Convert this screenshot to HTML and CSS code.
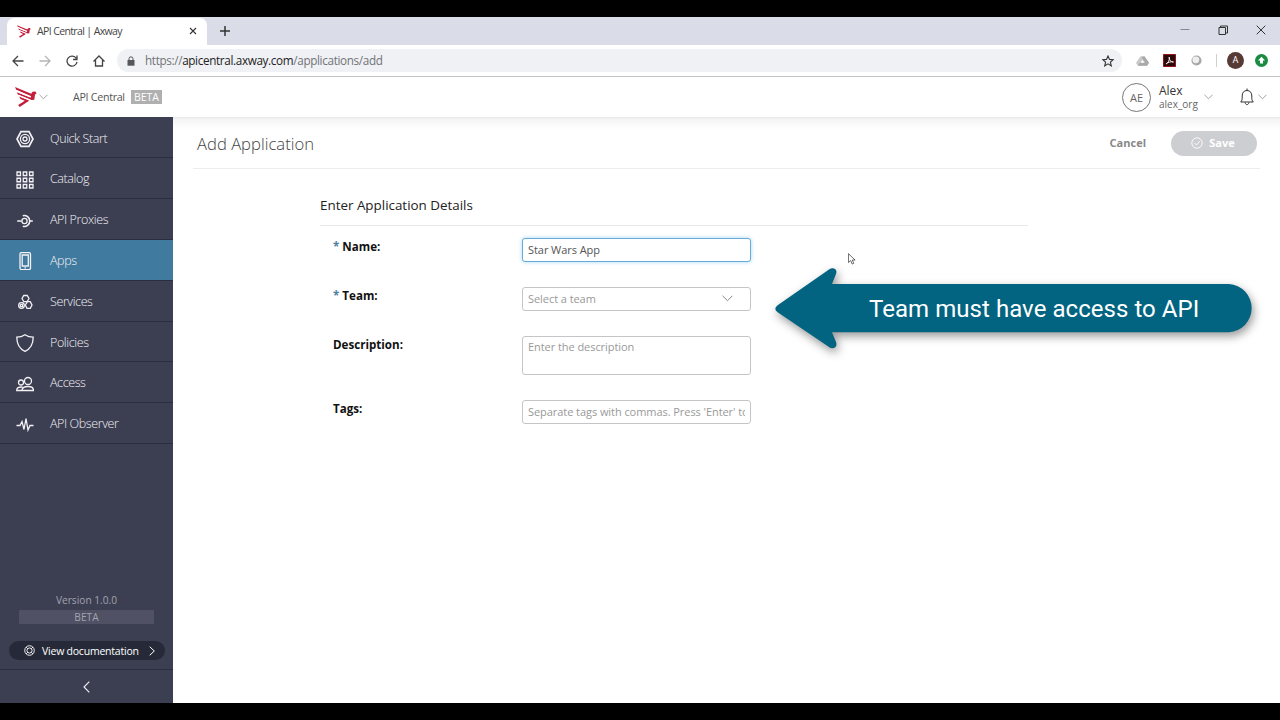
FILE: index.html
```
<!DOCTYPE html>
<html lang="en">
<head>
    <meta charset="UTF-8">
    <title>API Central | Axway</title>
    <link rel="stylesheet" href="styles.css">
</head>
<body>
    <svg class="sprite" aria-hidden="true">
        <symbol id="logo" viewBox="0 0 22 20">
            <path d="M0 0L16.200 6.700L17.500 4.700L20.500 4.500L21.500 6.600L20 7.400L19.300 12.800L16.500 13L2.800 7.400L1.800 5.200L15.500 10.600L16.200 9.200L1.200 2.700Z"/>
            <path d="M4 9.300L14.500 13.600L4.700 20L3.200 17.900L9.800 13.800L5.500 12Z"/>
            <path class="gap" d="M1.500 4L15.500 9.900M3.200 8.400L15 13.200"/>
        </symbol>
        <symbol id="chevron" viewBox="0 0 10 6">
            <path d="M.5 .5L5 5L9.500 .5"/>
        </symbol>
    </svg>

    <div class="tab-strip">
        <div class="tab">
            <svg class="logo logo-small"><use href="#logo"/></svg>
            <span class="tab-title">API Central | Axway</span>
            <svg class="icon tab-close" viewBox="0 0 8 8"><path d="M1 1L7 7M7 1L1 7"/></svg>
        </div>
        <svg class="icon new-tab" viewBox="0 0 12 12"><path d="M6 1V11M1 6H11"/></svg>
        <div class="window-buttons">
            <svg class="icon minimize" viewBox="0 0 10 10"><path d="M0.500 4.500H9.500"/></svg>
            <svg class="icon" viewBox="0 0 10 10"><path d="M1 2.500H7.500V9.500H1ZM2.500 2.500V1H9.500V8H7.500"/></svg>
            <svg class="icon" viewBox="0 0 10 10"><path d="M.7 .7L9.300 9.300M9.300 .7L.7 9.300"/></svg>
        </div>
    </div>

    <div class="toolbar">
        <div class="nav-buttons">
            <svg class="icon" viewBox="0 0 12 12"><path d="M11.500 6H1M6 1L1 6L6 11"/></svg>
            <svg class="icon disabled" viewBox="0 0 12 12"><path d="M.5 6H11M6 1L11 6L6 11"/></svg>
            <svg class="icon" viewBox="0 0 12 12"><path d="M10.300 3.500A5 5 0 1 0 11 6.800M7 4.500H11V.5"/></svg>
            <svg class="icon" viewBox="0 0 12 12"><path d="M.5 6.500L6 1L11.500 6.500M2.500 5V11H9.500V5"/></svg>
        </div>
        <div class="address-bar">
            <svg class="lock" viewBox="0 0 8 10"><path class="body" d="M.5 4H7.500V9.700H.5Z"/><path class="shackle" d="M2 4.500V2.800A2 2 0 0 1 6 2.800V4.500"/></svg>
            <span class="url">https://<b>apicentral.axway.com</b>/applications/add</span>
            <svg class="icon star" viewBox="0 0 12 12"><path d="M6 1L7.500 4.400L11.200 4.700L8.400 7.200L9.300 10.900L6 8.900L2.700 10.900L3.600 7.200L.8 4.700L4.500 4.400Z"/></svg>
        </div>
        <div class="extensions">
            <svg class="drive" viewBox="0 0 14 12"><path fill="#c9c9c9" d="M5 1H9L14 8L12 11H2L0 8Z"/><path fill="#a9a9a9" d="M9 1L14 8H10L6 2ZM2 11L4 8H14L12 11Z"/><path fill="#fff" d="M7 5L9 8H5Z"/></svg>
            <svg class="acrobat" viewBox="0 0 13 13"><path fill="#2b0809" stroke="#941519" d="M.5 .5H12.500V12.500H.5Z"/><path fill="none" stroke="#f4e8e8" d="M3 10C5 9 7 6 6.200 3C6 6 8 8 10.500 8C8 7.500 5 8 3 10"/></svg>
            <svg class="ring" viewBox="0 0 12 12"><circle cx="6" cy="6" r="5.500" fill="#a7a7a7"/><circle cx="5.300" cy="5.300" r="3.700" fill="#efefef"/></svg>
            <span class="separator"></span>
            <span class="profile">A</span>
            <svg class="update" viewBox="0 0 13 13"><circle cx="6.500" cy="6.500" r="6.500" fill="#1c8b42"/><path fill="#fff" d="M6.500 2.700L10 6.500H8V9.500H5V6.500H3Z"/></svg>
        </div>
    </div>

    <header class="app-header">
        <svg class="logo"><use href="#logo"/></svg>
        <svg class="chevron"><use href="#chevron"/></svg>
        <span class="product">API Central</span>
        <span class="beta-badge">BETA</span>
        <div class="user">
            <span class="avatar">AE</span>
            <div class="user-text">
                <div class="user-name">Alex</div>
                <div class="user-org">alex_org</div>
            </div>
            <svg class="chevron"><use href="#chevron"/></svg>
            <svg class="icon bell" viewBox="0 0 14 18"><path d="M.7 14H13.300C11.800 12.500 11.800 11.500 11.800 8C11.800 4.500 10 2.500 7 2.500S2.200 4.500 2.200 8C2.200 11.500 2.200 12.500 .7 14ZM7 2.500V.5M5.200 14.500C5.200 17.300 8.800 17.300 8.800 14.500"/></svg>
            <svg class="chevron"><use href="#chevron"/></svg>
        </div>
    </header>

    <div class="app-body">
        <nav class="sidebar">
            <a class="nav-item">
                <svg class="icon" viewBox="0 0 18 18"><path stroke-width="1.700" d="M5 1.700H13L17 9L13 16.300H5L1 9Z"/><circle cx="9" cy="9" r="4.600"/><circle cx="9" cy="9" r="2"/></svg>
                Quick Start
            </a>
            <a class="nav-item">
                <svg class="icon" viewBox="0 0 18 18"><path d="M1 1H4.500V4.500H1ZM7.250 1H10.750V4.500H7.250ZM13.500 1H17V4.500H13.500ZM1 7.250H4.500V10.750H1ZM7.250 7.250H10.750V10.750H7.250ZM13.500 7.250H17V10.750H13.500ZM1 13.500H4.500V17H1ZM7.250 13.500H10.750V17H7.250ZM13.500 13.500H17V17H13.500Z"/></svg>
                Catalog
            </a>
            <a class="nav-item">
                <svg class="icon" viewBox="0 0 18 18"><circle cx="8.500" cy="9" r="2.600"/><path stroke-width="1.600" d="M1.200 9H5.500M14 9H16.800M6.800 3.700A5.500 5.500 0 1 1 6.800 14.300"/></svg>
                API Proxies
            </a>
            <a class="nav-item active">
                <svg class="icon" viewBox="0 0 18 18"><rect x="4" y=".6" width="10.500" height="17" rx="1.500"/><path d="M6.200 3H12.300V14H6.200ZM8.500 15.800H10"/></svg>
                Apps
            </a>
            <a class="nav-item">
                <svg class="icon" viewBox="0 0 18 18"><path d="M7.800 2.500H11.200L13 5.500L11.200 8.700H7.800L6 5.500ZM11.500 8.700H14.300L16 12L14.300 15.300H11L9.300 12Z"/><circle cx="5.500" cy="12.500" r="2.800"/><circle cx="5.500" cy="12.500" r="1.200"/></svg>
                Services
            </a>
            <a class="nav-item">
                <svg class="icon" viewBox="0 0 18 18"><path d="M9 .8C6.500 2.500 4 3.200 .8 3.200C.8 10 3 14.500 9 17.300C15 14.500 17.200 10 17.200 3.200C14 3.200 11.500 2.500 9 .8Z"/></svg>
                Policies
            </a>
            <a class="nav-item">
                <svg class="icon" viewBox="0 0 18 18"><circle cx="12" cy="6" r="3.500"/><circle cx="5" cy="7.500" r="2.500"/><path d="M6 15.500C6 12.800 8 11.500 12 11.500S17.500 12.800 17.500 15.500ZM5.500 15.500H.7C.7 12.800 2.500 11.800 6.500 12"/></svg>
                Access
            </a>
            <a class="nav-item">
                <svg class="icon" viewBox="0 0 18 18"><path d="M.5 9.500H4L6 5.500L8 13.500L10 2.500L12 14L14 9.500H17.500"/></svg>
                API Observer
            </a>

            <div class="sidebar-footer">
                <div class="version">Version 1.0.0</div>
                <div class="version-beta">BETA</div>
                <div class="docs-button">
                    <svg class="icon" viewBox="0 0 12 12"><circle cx="6" cy="6" r="5.200"/><circle cx="6" cy="6" r="2.800"/><path d="M2.300 2.300L4 4M8 8L9.700 9.700M9.700 2.300L8 4M4 8L2.300 9.700"/></svg>
                    <span>View documentation</span>
                    <svg class="icon docs-arrow" viewBox="0 0 6 10"><path d="M.7 .7L5.300 5L.7 9.300"/></svg>
                </div>
                <div class="collapse">
                    <svg class="icon" viewBox="0 0 7 12"><path d="M6.300 .7L1 6L6.300 11.300"/></svg>
                </div>
            </div>
        </nav>

        <main class="content">
            <div class="page-header">
                <h1>Add Application</h1>
                <button class="btn-cancel">Cancel</button>
                <button class="btn-save">
                    <svg class="icon" viewBox="0 0 12 12"><circle cx="6" cy="6" r="5.200"/><path d="M3.500 6L5.500 8L8.800 4.200"/></svg>
                    Save
                </button>
            </div>

            <form class="details">
                <h2>Enter Application Details</h2>
                <div class="form-row">
                    <label for="name"><i>*</i> Name:</label>
                    <input type="text" id="name" class="field focused" value="Star Wars App">
                </div>
                <div class="form-row">
                    <label><i>*</i> Team:</label>
                    <div class="field select">
                        <span>Select a team</span>
                        <svg class="chevron"><use href="#chevron"/></svg>
                    </div>
                </div>
                <div class="form-row description-row">
                    <label for="description">Description:</label>
                    <textarea id="description" class="field" placeholder="Enter the description"></textarea>
                </div>
                <div class="form-row">
                    <label for="tags">Tags:</label>
                    <input type="text" id="tags" class="field" placeholder="Separate tags with commas. Press 'Enter' to add">
                </div>
            </form>
        </main>
    </div>

    <div class="callout">
        <svg class="callout-shape" viewBox="0 0 480 84"><path d="M3 39L54 3.500C58 .5 63 3 61 8L57 18H454A24.200 24.200 0 0 1 454 66.300H57L61 76C63 81 58 84 54 81L3 46.500C-.5 44 -.5 41.500 3 39Z"/></svg>
        <span class="callout-text">Team must have access to API</span>
    </div>
    <svg class="cursor" viewBox="0 0 9 13"><path d="M.5 .5V10.500L3 8.300L4.700 12.200L6.500 11.400L4.800 7.700H8Z"/></svg>
</body>
</html>
```
FILE: styles.css
```
:root {
    --sidebar: #3c3e52;
    --sidebar-line: #2c2e40;
    --active: #417a9f;
    --red: #c41e3a;
    --callout: #026480;
}

* {
    box-sizing: border-box;
}

body {
    display: flex;
    flex-direction: column;
    width: 1280px;
    height: 720px;
    margin: 0;
    overflow: hidden;
    border-top: 17px solid #000;
    border-bottom: 17px solid #000;
    background-color: #fff;
    font-family: "Open Sans", "Noto Sans", sans-serif;
    font-size: 11px;
    color: #333;
}

.sprite {
    position: absolute;
    width: 0;
    height: 0;
}

svg {
    display: block;
    flex: none;
}

.icon {
    fill: none;
    stroke: currentColor;
    stroke-width: 1.3;
}

.logo {
    width: 22px;
    height: 20px;
    fill: var(--red);
}

.gap {
    fill: none;
    stroke: #fff;
    stroke-width: 1.4;
}

.logo-small {
    width: 14px;
    height: 13px;
}

.chevron {
    width: 9px;
    height: 6px;
    fill: none;
    stroke: #999;
    stroke-width: 1;
}

/* Browser window */
.tab-strip {
    display: flex;
    align-items: center;
    flex: none;
    height: 28px;
    padding-left: 7px;
    background-color: #dadde7;
}

.tab {
    display: flex;
    align-items: center;
    width: 200px;
    height: 27px;
    margin-top: 1px;
    padding: 0 10px 1px;
    border-radius: 7px 7px 0 0;
    background-color: #fff;
}

.tab-title {
    flex: 1;
    margin-left: 6px;
    font-size: 10.5px;
    letter-spacing: -0.62px;
    color: #444;
}

.tab-close {
    width: 8px;
    height: 8px;
    stroke-width: 1.1;
}

.new-tab {
    width: 12px;
    height: 12px;
    margin-left: 12px;
    stroke-width: 1.5;
}

.window-buttons {
    display: flex;
    gap: 28px;
    margin: -3px 14px 0 auto;
}

.window-buttons .icon {
    width: 10px;
    height: 10px;
    stroke-width: 1;
}

.window-buttons .minimize {
    color: #888;
}

.toolbar {
    display: flex;
    align-items: center;
    flex: none;
    height: 32px;
    border-bottom: 1px solid #c4c4c6;
}

.nav-buttons {
    display: flex;
    gap: 15px;
    margin-left: 12px;
    color: #444;
}

.nav-buttons .icon {
    width: 12px;
    height: 12px;
}

.nav-buttons .disabled {
    color: #b5b5b5;
}

.address-bar {
    display: flex;
    align-items: center;
    width: 1005px;
    height: 23px;
    margin-left: 12px;
    padding: 0 8px 0 10px;
    border-radius: 12px;
    background-color: #f0f1f4;
}

.lock {
    width: 8px;
    height: 10px;
}

.lock .body {
    fill: #55575b;
}

.lock .shackle {
    fill: none;
    stroke: #55575b;
}

.url {
    flex: 1;
    margin: -2px 0 0 10px;
    font-size: 11.7px;
    letter-spacing: -0.34px;
    color: #707378;
}

.url b {
    font-weight: 400;
    color: #222;
}

.star {
    width: 12px;
    height: 12px;
    stroke-width: 1.1;
}

.extensions {
    display: flex;
    align-items: center;
    margin-left: 14px;
}

.drive {
    width: 13px;
    height: 12px;
}

.acrobat {
    width: 13px;
    height: 13px;
    margin-left: 14px;
}

.ring {
    width: 11px;
    height: 11px;
    margin-left: 15px;
}

.separator {
    width: 1px;
    height: 13px;
    margin-left: 14px;
    background-color: #d0d0d0;
}

.profile {
    width: 17px;
    height: 17px;
    margin-left: 10px;
    border-radius: 50%;
    background-color: #563a36;
    color: #fff;
    font: 9px/17px Roboto, sans-serif;
    text-align: center;
}

.update {
    width: 13px;
    height: 13px;
    margin-left: 11px;
}

/* Application header */
.app-header {
    display: flex;
    align-items: center;
    flex: none;
    height: 40px;
    padding: 0 13px 0 15px;
}

.app-header > .chevron {
    margin-left: 2px;
}

.product {
    width: 52px;
    margin: -1px 0 0 25px;
    font-size: 10.7px;
    letter-spacing: -0.3px;
    white-space: nowrap;
    color: #555;
}

.beta-badge {
    width: 31px;
    height: 14px;
    margin-left: 6px;
    background-color: #b0b0b0;
    color: #fff;
    font-size: 10.5px;
    line-height: 14px;
    text-align: center;
}

.user {
    display: flex;
    align-items: center;
    margin-left: auto;
}

.avatar {
    width: 29px;
    height: 29px;
    border: 1px solid #777;
    border-radius: 50%;
    font-size: 11px;
    line-height: 27px;
    text-align: center;
    color: #666;
}

.user-text {
    width: 45px;
    margin: -1px 0 0 8px;
}

.user-name {
    font-size: 12px;
    line-height: 14px;
}

.user-org {
    font-size: 10px;
    line-height: 12px;
    color: #666;
}

.bell {
    width: 14px;
    height: 18px;
    margin: 0 4px 0 27px;
    stroke-width: 1;
}

/* Sidebar */
.app-body {
    display: flex;
    flex: 1;
    min-height: 0;
}

.sidebar {
    display: flex;
    flex-direction: column;
    width: 173px;
    padding-top: 0.7px;
    background-color: var(--sidebar);
    color: #f2f2f5;
}

.nav-item {
    display: flex;
    align-items: center;
    gap: 16px;
    height: 40.8px;
    padding: 1px 0 0 16px;
    border-bottom: 1px solid var(--sidebar-line);
    font-size: 12.5px;
    font-weight: 300;
    letter-spacing: -0.4px;
}

.nav-item.active {
    background-color: var(--active);
}

.nav-item .icon {
    width: 18px;
    height: 18px;
    margin-top: 2px;
}

.sidebar-footer {
    margin-top: auto;
    text-align: center;
}

.version {
    font-size: 10.2px;
    line-height: 14px;
    color: #a2a3af;
}

.version-beta {
    height: 14px;
    margin: 3px 19px 17px;
    border-radius: 1px;
    background-color: #505164;
    font-size: 10.2px;
    line-height: 14px;
    color: #a2a3af;
}

.docs-button {
    display: flex;
    align-items: center;
    height: 19px;
    margin: 0 8px 0 9px;
    padding: 0 10px 0 15px;
    border-radius: 10px;
    background-color: #262a38;
    color: #fff;
    font-size: 10.5px;
    letter-spacing: -0.22px;
}

.docs-button .icon {
    width: 11px;
    height: 11px;
    stroke-width: 1;
}

.docs-button span {
    flex: 1;
    margin-left: 7px;
    text-align: left;
    white-space: nowrap;
}

.docs-button .docs-arrow {
    width: 6px;
    height: 10px;
}

.collapse {
    display: flex;
    justify-content: center;
    align-items: center;
    height: 34px;
    margin-top: 9px;
    border-top: 1px solid var(--sidebar-line);
}

.collapse .icon {
    width: 7px;
    height: 12px;
    stroke-width: 1.1;
}

/* Page content */
.content {
    flex: 1;
    padding: 0 20px;
    background: linear-gradient(#e6e6e6, #f4f4f4 2px, #f7f7f7 5px, #fff 13px);
}

.page-header {
    display: flex;
    align-items: center;
    height: 52px;
    padding: 0 3px 0 4px;
    border-bottom: 1px solid #ededed;
}

h1 {
    margin: 2px 0 0;
    font-size: 16.65px;
    font-weight: 300;
    color: #444;
}

button {
    border: none;
    background: none;
    font-family: inherit;
    font-size: 11px;
    font-weight: 700;
}

.btn-cancel {
    margin-left: auto;
    padding: 0;
    color: #888;
}

.btn-save {
    display: flex;
    justify-content: center;
    align-items: center;
    gap: 6px;
    width: 86px;
    height: 25px;
    margin: 1px 0 0 25px;
    padding: 0 7px 1px 5px;
    border-radius: 13px;
    background-color: #cdced1;
    color: #fff;
}

.btn-save .icon {
    width: 12px;
    height: 12px;
    stroke-width: 0.9;
}

.details {
    width: 708px;
    margin: 26px 0 0 127px;
}

h2 {
    height: 31px;
    margin: 0 0 12px;
    border-bottom: 1px solid #e8e8e8;
    font-size: 13.4px;
    font-weight: 400;
    line-height: 20px;
    color: #222;
}

.form-row {
    display: flex;
    align-items: flex-start;
    height: 49px;
    padding-left: 13px;
}

.description-row {
    height: 64px;
}

label {
    width: 189px;
    font-size: 11.6px;
    font-weight: 700;
    line-height: 18px;
    color: #111;
}

label i {
    font-style: normal;
    color: #4f7f9f;
}

.field {
    width: 229px;
    height: 24px;
    padding: 0 5px 2px;
    border: 1px solid #c4c5c8;
    border-radius: 3px;
    outline: none;
    background-color: #fff;
    font-family: inherit;
    font-size: 11px;
    letter-spacing: -0.06px;
    color: #555;
}

.field::placeholder {
    color: #999;
}

.focused {
    border-color: #68abd6;
    box-shadow: 0 0 4px #a8d7f2;
}

textarea.field {
    height: 39px;
    padding-top: 2px;
    resize: none;
}

.select {
    display: flex;
    justify-content: space-between;
    align-items: center;
    padding-right: 17px;
    color: #999;
}

.select .chevron {
    width: 11px;
    height: 7px;
    stroke: #777;
    stroke-width: 0.8;
}

/* Annotation over the page */
.callout {
    position: absolute;
    left: 775px;
    top: 266px;
    width: 480px;
    height: 84px;
}

.callout-shape {
    width: 480px;
    height: 84px;
    overflow: visible;
    fill: var(--callout);
    filter: drop-shadow(2px 4px 5px rgba(0, 0, 0, 0.4));
}

.callout-text {
    position: absolute;
    left: 94px;
    top: 28px;
    font-family: Roboto, sans-serif;
    font-size: 24px;
    letter-spacing: 0.05px;
    line-height: 30px;
    color: #fff;
    white-space: nowrap;
}

.cursor {
    position: absolute;
    left: 848px;
    top: 253px;
    width: 8px;
    height: 12px;
    fill: #fff;
    stroke: #333;
    stroke-width: 0.8;
}
```
